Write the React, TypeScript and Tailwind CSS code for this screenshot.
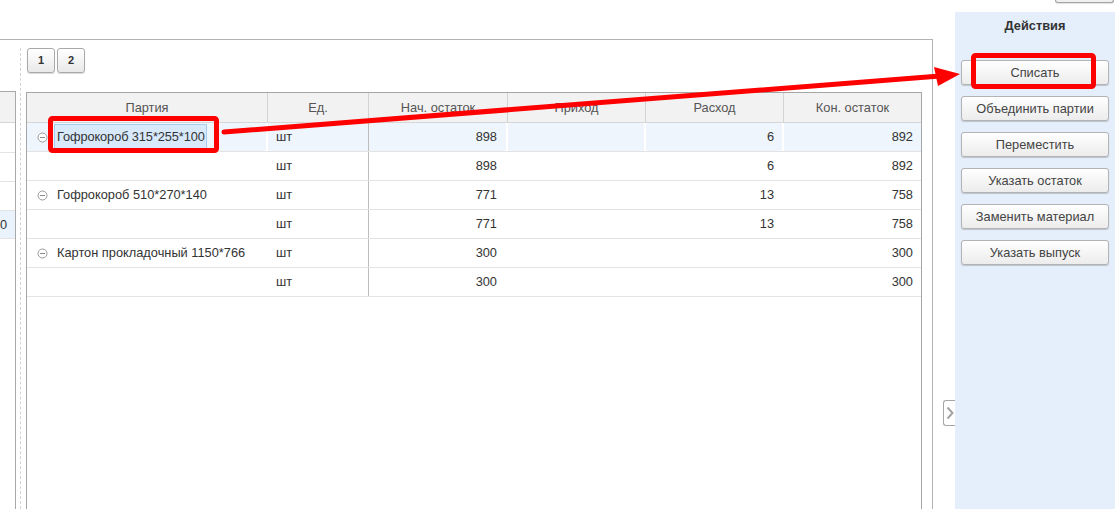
import React from 'react';

const cols = 'grid grid-cols-[241px_101px_139px_138px_138px_137px]';

type Row = {
  name?: string;
  unit: string;
  start: string;
  inc?: string;
  out?: string;
  end: string;
  selected?: boolean;
};

const rows: Row[] = [
  { name: 'Гофрокороб 315*255*100', unit: 'шт', start: '898', out: '6', end: '892', selected: true },
  { unit: 'шт', start: '898', out: '6', end: '892' },
  { name: 'Гофрокороб 510*270*140', unit: 'шт', start: '771', out: '13', end: '758' },
  { unit: 'шт', start: '771', out: '13', end: '758' },
  { name: 'Картон прокладочный 1150*766', unit: 'шт', start: '300', end: '300' },
  { unit: 'шт', start: '300', end: '300' },
];

const actions = ['Списать', 'Объединить партии', 'Переместить', 'Указать остаток', 'Заменить материал', 'Указать выпуск'];

function CollapseIcon() {
  return (
    <svg width="11" height="11" viewBox="0 0 11 11" className="shrink-0">
      <circle cx="5.5" cy="5.5" r="4.5" fill="white" stroke="#9a9a9a" strokeWidth="1" />
      <line x1="3" y1="5.5" x2="8" y2="5.5" stroke="#8a8a8a" strokeWidth="1" />
    </svg>
  );
}

export default function App() {
  return (
    <div className="relative flex w-[1119px] h-[509px] overflow-hidden bg-white font-['Liberation_Sans',Arial,sans-serif] text-[12.8px] text-[#333]">
      {/* main area */}
      <div className="w-[933px] flex flex-col">
        <div className="h-[39px] shrink-0" />
        <div className="flex-1 flex border-t border-r border-[#b3b3b3]">
          {/* left table strip */}
          <div className="w-[16px] shrink-0 pt-[51px] flex flex-col">
            <div className="flex-1 border-t border-r border-[#a9a9a9]">
              <div className="h-[31px] bg-[#f2f2f2] border-b border-[#d6d6d6]" />
              <div className="h-[30px] border-b border-[#e3e3e3]" />
              <div className="h-[29px] border-b border-[#e3e3e3]" />
              <div className="h-[29px] border-b border-[#e3e3e3]" />
              <div className="h-[28px] border-b border-[#e3e3e3] bg-[#eaf3fc] flex items-center justify-end pr-[8px] overflow-hidden whitespace-nowrap">
                0
              </div>
            </div>
          </div>
          {/* dashed splitter */}
          <div className="w-[10px] shrink-0 pt-[8px] pl-[4px]">
            <div className="h-full border-l border-dashed border-[#d2d2d2]" />
          </div>
          {/* right part */}
          <div className="flex-1 flex flex-col pr-[10px]">
            <div className="flex gap-[2px] pt-[8px] pl-[1px] h-[52px] shrink-0">
              {['1', '2'].map((p) => (
                <div
                  key={p}
                  className="w-[28px] h-[25px] flex items-center justify-center rounded-[3px] border border-[#a9a9a9] bg-gradient-to-b from-white to-[#e9e9e9] shadow-[0_1px_1px_rgba(0,0,0,0.15)] text-[11px] font-bold text-[#333]"
                >
                  {p}
                </div>
              ))}
            </div>
            <div className="flex-1 border-t border-l border-r border-[#a6a6a6]">
              {/* header */}
              <div className={`${cols} h-[30px] bg-[#f2f2f2] border-b border-[#d6d6d6] text-[#555]`}>
                {['Партия', 'Ед.', 'Нач. остаток', 'Приход', 'Расход', 'Кон. остаток'].map((h, i) => (
                  <div
                    key={h}
                    className={`flex items-center justify-center ${i < 5 ? 'border-r border-[#d2d2d2]' : ''}`}
                  >
                    {h}
                  </div>
                ))}
              </div>
              {/* body */}
              {rows.map((r, i) => (
                <div
                  key={i}
                  className={`${cols} h-[29px] border-b border-[#e3e3e3] ${r.selected ? 'bg-[#eef5fc]' : ''}`}
                >
                  <div className="flex items-center pl-[10px] border-r-2 border-white">
                    {r.name && (
                      <>
                        <CollapseIcon />
                        {r.selected ? (
                          <span className="ml-[6px] h-[27px] flex items-center pl-[2px] pr-[1px] bg-[#d7e9fa] border border-[#a9cdf0] whitespace-nowrap tracking-[-0.1px]">
                            {r.name}
                          </span>
                        ) : (
                          <span className="ml-[9px] whitespace-nowrap">{r.name}</span>
                        )}
                      </>
                    )}
                  </div>
                  <div className="flex items-center pl-[8px] border-r border-[#bdbdbd]">{r.unit}</div>
                  <div className="flex items-center justify-end pr-[9px] border-r-2 border-white">{r.start}</div>
                  <div className="flex items-center justify-end pr-[8px] border-r-2 border-white">{r.inc}</div>
                  <div className="flex items-center justify-end pr-[8px] border-r-2 border-white">{r.out}</div>
                  <div className="flex items-center justify-end pr-[8px]">{r.end}</div>
                </div>
              ))}
            </div>
          </div>
        </div>
      </div>

      {/* collapse tab column */}
      <div className="w-[22px] shrink-0 pt-[400px] pl-[10px]">
        <div className="w-[12px] h-[26px] flex items-center justify-center rounded-l-[3px] border border-r-0 border-[#a6a6a6] bg-white">
          <svg width="8" height="14" viewBox="0 0 8 14">
            <polyline points="1.5,1.5 6.5,7 1.5,12.5" fill="none" stroke="#a3a3a3" strokeWidth="2" />
          </svg>
        </div>
      </div>

      {/* actions sidebar */}
      <div className="w-[160px] shrink-0 flex flex-col">
        <div className="h-[12px] shrink-0">
          <div className="ml-[100px] w-[59px] h-[3px] border border-t-0 border-[#a3a3a3] rounded-b-[3px] bg-[#f0f0f0] shadow-[0_1px_1px_rgba(0,0,0,0.12)]" />
        </div>
        <div className="flex-1 bg-[#e4effb] flex flex-col px-[6px]">
          <div className="h-[27px] pt-[1px] flex items-center justify-center font-bold text-[#333]">Действия</div>
          <div className="flex flex-col gap-[11px] pt-[21px]">
            {actions.map((a) => (
              <div
                key={a}
                className="h-[25px] flex items-center justify-center rounded-[3px] border border-[#b3b3b3] bg-gradient-to-b from-white to-[#ececec] shadow-[0_1px_1px_rgba(0,0,0,0.18)] text-[#444]"
              >
                {a}
              </div>
            ))}
          </div>
        </div>
      </div>

      {/* red annotations overlay */}
      <svg className="absolute inset-0 pointer-events-none" width="1119" height="509">
        <rect x="50.5" y="118.5" width="166" height="32" rx="2" fill="none" stroke="#ff0000" strokeWidth="5" />
        <rect x="973.5" y="55.5" width="120" height="31" rx="2" fill="none" stroke="#ff0000" strokeWidth="5" />
        <line x1="224" y1="132" x2="940" y2="76" stroke="#ff0000" strokeWidth="5" strokeLinecap="round" />
        <polygon points="960,74 934,67 938,86" fill="#ff0000" />
      </svg>
    </div>
  );
}
